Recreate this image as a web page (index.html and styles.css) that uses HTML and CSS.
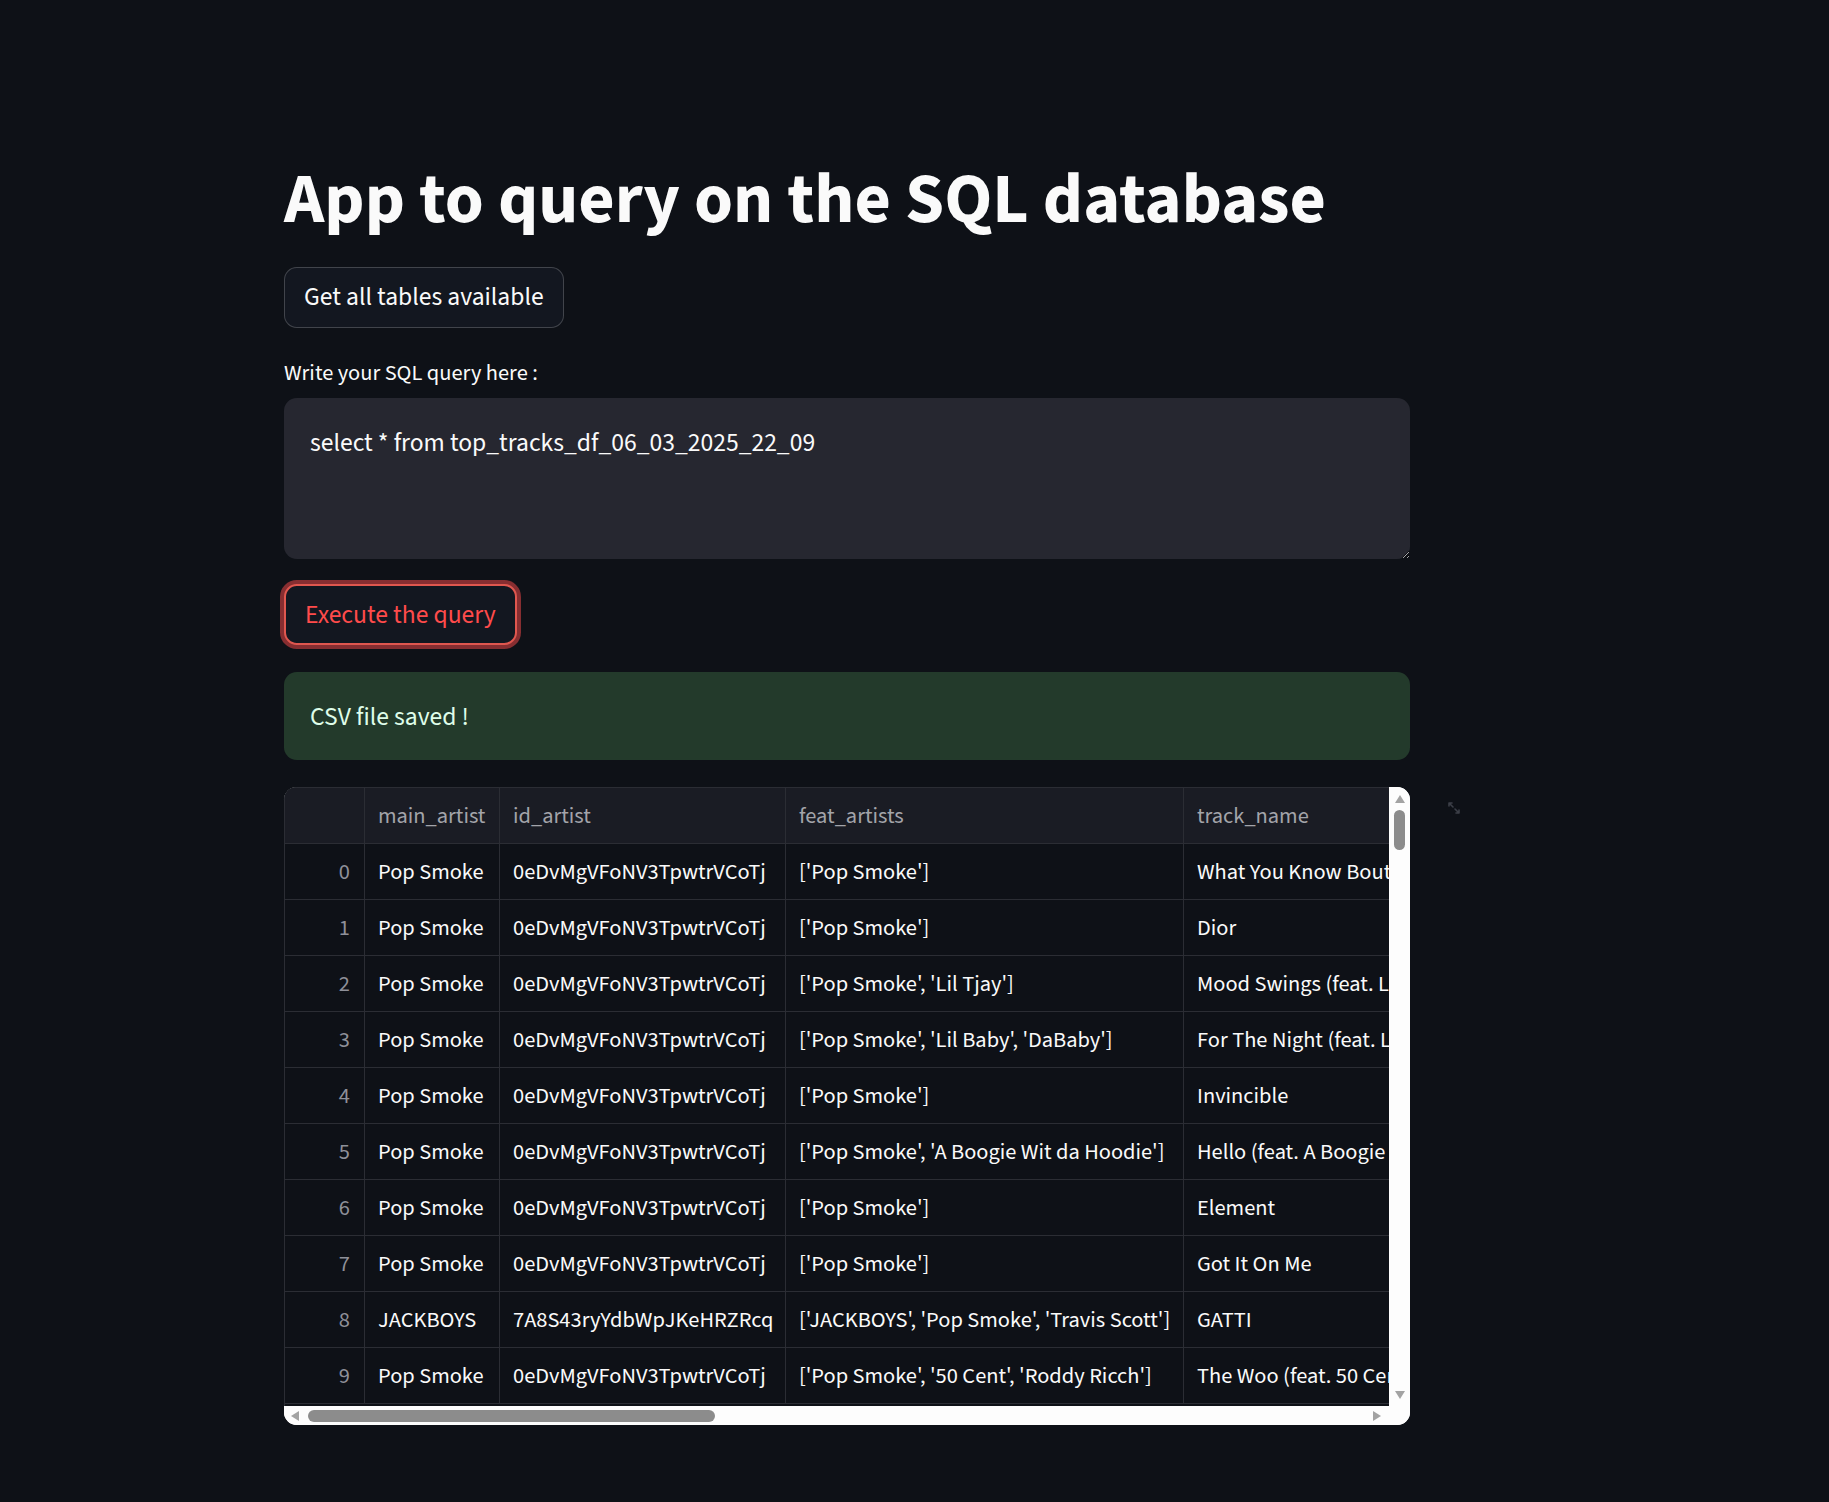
FILE: index.html
```html
<!DOCTYPE html>
<html lang="en">
<head>
<meta charset="utf-8">
<title>App to query on the SQL database</title>
<link rel="stylesheet" href="styles.css">
</head>
<body>
<main class="block">
  <h1 class="title">App to query on the SQL database</h1>
  <button class="btn" type="button">Get all tables available</button>
  <label class="label" for="q">Write your SQL query here :</label>
  <textarea id="q" class="query" spellcheck="false">select * from top_tracks_df_06_03_2025_22_09</textarea>
  <button class="btn btn-focus" type="button">Execute the query</button>
  <div class="alert">CSV file saved !</div>

  <div class="frame-wrap">
    <div class="frame">
      <div class="viewport">
        <div class="grid">
          <div class="cell head idx"></div>
          <div class="cell head">main_artist</div>
          <div class="cell head">id_artist</div>
          <div class="cell head">feat_artists</div>
          <div class="cell head">track_name</div>

          <div class="cell idx">0</div><div class="cell">Pop Smoke</div><div class="cell">0eDvMgVFoNV3TpwtrVCoTj</div><div class="cell">['Pop Smoke']</div><div class="cell">What You Know Bout Love</div>
          <div class="cell idx">1</div><div class="cell">Pop Smoke</div><div class="cell">0eDvMgVFoNV3TpwtrVCoTj</div><div class="cell">['Pop Smoke']</div><div class="cell">Dior</div>
          <div class="cell idx">2</div><div class="cell">Pop Smoke</div><div class="cell">0eDvMgVFoNV3TpwtrVCoTj</div><div class="cell">['Pop Smoke', 'Lil Tjay']</div><div class="cell">Mood Swings (feat. Lil Tjay)</div>
          <div class="cell idx">3</div><div class="cell">Pop Smoke</div><div class="cell">0eDvMgVFoNV3TpwtrVCoTj</div><div class="cell">['Pop Smoke', 'Lil Baby', 'DaBaby']</div><div class="cell">For The Night (feat. Lil Baby &amp; DaBaby)</div>
          <div class="cell idx">4</div><div class="cell">Pop Smoke</div><div class="cell">0eDvMgVFoNV3TpwtrVCoTj</div><div class="cell">['Pop Smoke']</div><div class="cell">Invincible</div>
          <div class="cell idx">5</div><div class="cell">Pop Smoke</div><div class="cell">0eDvMgVFoNV3TpwtrVCoTj</div><div class="cell">['Pop Smoke', 'A Boogie Wit da Hoodie']</div><div class="cell">Hello (feat. A Boogie Wit da Hoodie)</div>
          <div class="cell idx">6</div><div class="cell">Pop Smoke</div><div class="cell">0eDvMgVFoNV3TpwtrVCoTj</div><div class="cell">['Pop Smoke']</div><div class="cell">Element</div>
          <div class="cell idx">7</div><div class="cell">Pop Smoke</div><div class="cell">0eDvMgVFoNV3TpwtrVCoTj</div><div class="cell">['Pop Smoke']</div><div class="cell">Got It On Me</div>
          <div class="cell idx">8</div><div class="cell">JACKBOYS</div><div class="cell">7A8S43ryYdbWpJKeHRZRcq</div><div class="cell">['JACKBOYS', 'Pop Smoke', 'Travis Scott']</div><div class="cell">GATTI</div>
          <div class="cell idx">9</div><div class="cell">Pop Smoke</div><div class="cell">0eDvMgVFoNV3TpwtrVCoTj</div><div class="cell">['Pop Smoke', '50 Cent', 'Roddy Ricch']</div><div class="cell">The Woo (feat. 50 Cent &amp; Roddy Ricch)</div>
        </div>
      </div>
      <div class="vbar">
        <svg class="arrow" width="12" height="10" viewBox="0 0 12 10"><polygon points="6,1 11,9 1,9" fill="#a3a3a3"/></svg>
        <div class="vthumb"></div>
        <div class="vspace"></div>
        <svg class="arrow" width="12" height="10" viewBox="0 0 12 10"><polygon points="1,1 11,1 6,9" fill="#a3a3a3"/></svg>
      </div>
      <div class="hbar">
        <svg class="arrow" width="10" height="12" viewBox="0 0 10 12"><polygon points="1,6 9,1 9,11" fill="#a3a3a3"/></svg>
        <div class="hthumb"></div>
        <div class="hspace"></div>
        <svg class="arrow" width="10" height="12" viewBox="0 0 10 12"><polygon points="1,1 9,6 1,11" fill="#a3a3a3"/></svg>
      </div>
      <div class="corner"></div>
    </div>
    <svg class="fullscreen" width="14" height="14" viewBox="0 0 14 14" fill="none" stroke="#3c3f48" stroke-width="1.6" stroke-linecap="round">
      <path d="M2 2 L6 6 M2 2 L2 5 M2 2 L5 2"/>
      <path d="M12 12 L8 8 M12 12 L12 9 M12 12 L9 12"/>
    </svg>
  </div>
</main>
</body>
</html>
```

FILE: styles.css
```css
* { box-sizing: border-box; }

html, body {
  margin: 0;
  background: #0e1117;
}

body {
  font-family: "Source Sans Pro", "Source Sans 3", Lato, sans-serif;
  color: #fafafa;
}

.block {
  width: 1126px;
  margin-left: 284px;
  padding-top: 158px;
  padding-bottom: 77px;
  display: flex;
  flex-direction: column;
  align-items: flex-start;
}

.title {
  margin: 0;
  height: 84px;
  font-size: 70.4px;
  line-height: 84px;
  font-weight: 700;
  color: #fafafa;
  white-space: nowrap;
}

.btn {
  margin-top: 25px;
  height: 61px;
  padding: 0 19px;
  background: #131720;
  border: 1px solid rgba(250, 250, 250, 0.2);
  border-radius: 12.8px;
  color: #fafafa;
  font-family: inherit;
  font-size: 25.6px;
  line-height: 1;
}

.btn-focus {
  margin-top: 25px;
  padding-top: 2px;
  color: #ff4b4b;
  border: 2px solid #e0574f;
  box-shadow: 0 0 0 4px rgba(255, 75, 75, 0.5);
}

.label {
  margin-top: 28px;
  height: 32px;
  line-height: 34px;
  font-size: 22.4px;
  color: #fafafa;
}

.query {
  display: block;
  margin-top: 10px;
  width: 100%;
  height: 161px;
  padding: 25px 26px 23px;
  background: #262730;
  color: #fafafa;
  border: none;
  border-radius: 12.8px;
  font-family: inherit;
  font-size: 25.6px;
  line-height: 41px;
  resize: vertical;
  outline: none;
  color-scheme: dark;
}

.alert {
  margin-top: 27px;
  width: 100%;
  height: 88px;
  padding: 0 26px;
  line-height: 90px;
  background: #233a2b;
  color: #dffde9;
  border-radius: 12.8px;
  font-size: 25.6px;
}

.frame-wrap {
  position: relative;
  margin-top: 27px;
  width: 100%;
}

.frame {
  display: grid;
  grid-template-columns: 1105px 21px;
  grid-template-rows: 619px 19px;
  border-radius: 12.8px;
  overflow: hidden;
  background: #fdfdfd;
}

.viewport {
  overflow: hidden;
  background: #0e1117;
  border-left: 1px solid #2b2d34;
  border-top: 1px solid #2b2d34;
}

.grid {
  display: grid;
  grid-template-columns: 80px 135px 286px 398px 320px;
  grid-auto-rows: 56px;
  width: 1219px;
  font-size: 22.4px;
}

.cell {
  display: flex;
  align-items: center;
  padding: 0 12px 0 13px;
  border-right: 1px solid #2b2d34;
  border-bottom: 1px solid #2b2d34;
  white-space: nowrap;
  overflow: hidden;
  color: #fafafa;
}

.head {
  height: 56px;
  background: #1a1c24;
  color: #a3a4aa;
}

.idx {
  justify-content: flex-end;
  padding-right: 14px;
  color: #8e9099;
}

.head.idx { background: #1a1c24; }

.vbar {
  display: flex;
  flex-direction: column;
  align-items: center;
  padding: 7px 0 6px;
  background: #fdfdfd;
}

.vthumb {
  margin-top: 6px;
  width: 11px;
  height: 40px;
  border-radius: 6px;
  background: #8c8c8c;
}

.vspace { flex: 1; }

.hbar {
  display: flex;
  align-items: center;
  padding: 0 7px 0 6px;
  background: #fdfdfd;
}

.hthumb {
  margin-left: 8px;
  width: 407px;
  height: 12px;
  border-radius: 6px;
  background: #8c8c8c;
}

.hspace { flex: 1; }

.arrow { display: block; flex: none; }

.corner { background: #fdfdfd; }

.fullscreen {
  position: absolute;
  left: calc(100% + 37px);
  top: 14px;
}
```
